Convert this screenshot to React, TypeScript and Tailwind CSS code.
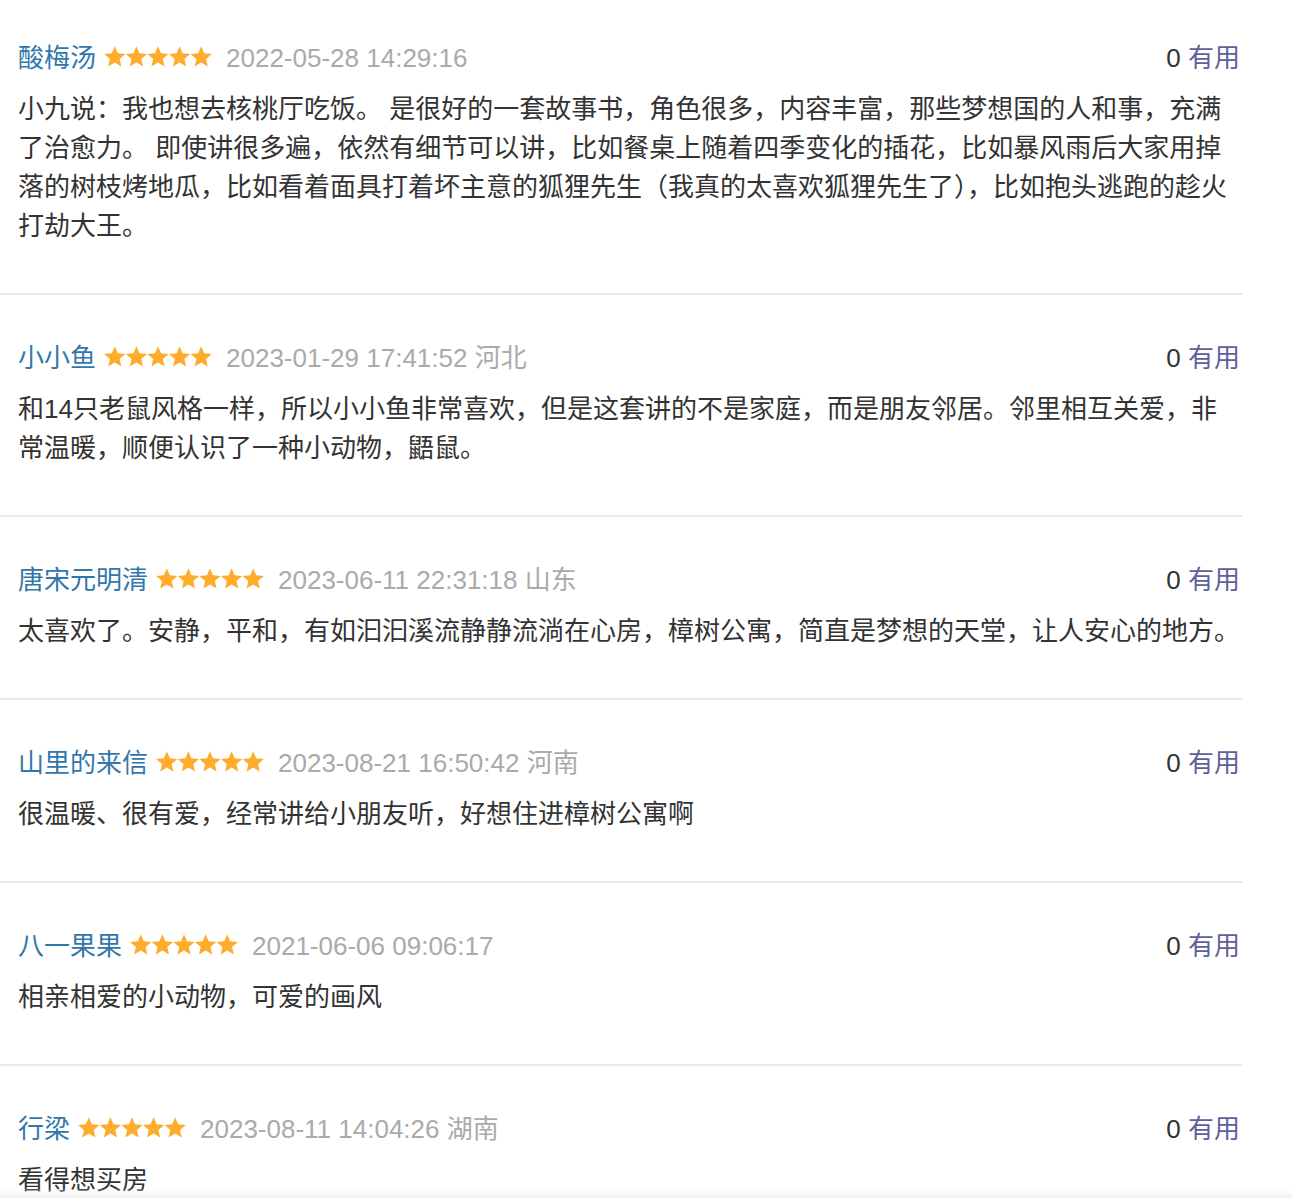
const reviews = [
  {
    name: '酸梅汤',
    time: '2022-05-28 14:29:16',
    place: '',
    text: '小九说：我也想去核桃厅吃饭。 是很好的一套故事书，角色很多，内容丰富，那些梦想国的人和事，充满了治愈力。 即使讲很多遍，依然有细节可以讲，比如餐桌上随着四季变化的插花，比如暴风雨后大家用掉落的树枝烤地瓜，比如看着面具打着坏主意的狐狸先生（我真的太喜欢狐狸先生了），比如抱头逃跑的趁火打劫大王。',
  },
  {
    name: '小小鱼',
    time: '2023-01-29 17:41:52',
    place: '河北',
    text: '和14只老鼠风格一样，所以小小鱼非常喜欢，但是这套讲的不是家庭，而是朋友邻居。邻里相互关爱，非常温暖，顺便认识了一种小动物，鼯鼠。',
  },
  {
    name: '唐宋元明清',
    time: '2023-06-11 22:31:18',
    place: '山东',
    text: '太喜欢了。安静，平和，有如汩汩溪流静静流淌在心房，樟树公寓，简直是梦想的天堂，让人安心的地方。',
  },
  {
    name: '山里的来信',
    time: '2023-08-21 16:50:42',
    place: '河南',
    text: '很温暖、很有爱，经常讲给小朋友听，好想住进樟树公寓啊',
  },
  {
    name: '八一果果',
    time: '2021-06-06 09:06:17',
    place: '',
    text: '相亲相爱的小动物，可爱的画风',
  },
  {
    name: '行梁',
    time: '2023-08-11 14:04:26',
    place: '湖南',
    text: '看得想买房',
  },
];

function Stars() {
  const star = (cx: number) => {
    const pts: string[] = [];
    for (let i = 0; i < 10; i++) {
      const r = i % 2 === 0 ? 11.2 : 5.1;
      const a = (Math.PI / 5) * i - Math.PI / 2;
      pts.push(`${(cx + r * Math.cos(a)).toFixed(2)},${(11.5 + r * Math.sin(a)).toFixed(2)}`);
    }
    return pts.join(' ');
  };
  return (
    <svg width="108" height="22" viewBox="0 0 108 22" className="ml-2 -translate-y-[2px] shrink-0">
      {[0, 1, 2, 3, 4].map((i) => (
        <polygon key={i} points={star(10.8 + i * 21.6)} fill="#ffac2d" />
      ))}
    </svg>
  );
}

export default function App() {
  return (
    <div
      className="min-h-screen bg-white"
      style={{ fontFamily: '"Liberation Sans", "Noto Sans CJK SC", sans-serif' }}
    >
      <div className="w-[1242px]">
        {reviews.map((r, i) => (
          <div
            key={i}
            className="border-b-2 border-[#eaeaea] pl-[18px] pr-[2px] pt-[44px] pb-[47px] first:pt-[39px]"
          >
            <div className="flex items-center text-[26px] leading-[39px]">
              <span className="text-[#3377aa]">{r.name}</span>
              <Stars />
              <span className="ml-[14px] text-[#aaaaaa]">
                {r.time}
                {r.place ? ` ${r.place}` : ''}
              </span>
              <span className="ml-auto text-[#333333]">
                0 <span className="text-[#5f5f9c]">有用</span>
              </span>
            </div>
            <p className="mt-3 text-[26px] leading-[39px] text-[#333333]">{r.text}</p>
          </div>
        ))}
      </div>
      <div className="pointer-events-none fixed bottom-0 left-0 h-[10px] w-full bg-linear-to-b from-white/0 to-[#f2f2f2]" />
    </div>
  );
}
